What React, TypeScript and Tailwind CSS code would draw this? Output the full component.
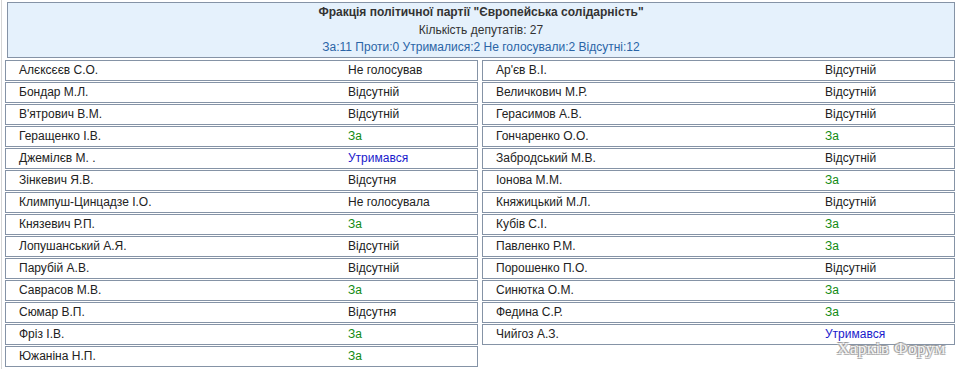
import React from "react";

type Vote = "За" | "Утримався" | "Відсутній" | "Відсутня" | "Не голосував" | "Не голосувала";

interface Deputy {
  name: string;
  vote: Vote;
}

const left: Deputy[] = [
  { name: "Алєксєєв С.О.", vote: "Не голосував" },
  { name: "Бондар М.Л.", vote: "Відсутній" },
  { name: "В'ятрович В.М.", vote: "Відсутній" },
  { name: "Геращенко І.В.", vote: "За" },
  { name: "Джемілєв М. .", vote: "Утримався" },
  { name: "Зінкевич Я.В.", vote: "Відсутня" },
  { name: "Климпуш-Цинцадзе І.О.", vote: "Не голосувала" },
  { name: "Князевич Р.П.", vote: "За" },
  { name: "Лопушанський А.Я.", vote: "Відсутній" },
  { name: "Парубій А.В.", vote: "Відсутній" },
  { name: "Саврасов М.В.", vote: "За" },
  { name: "Сюмар В.П.", vote: "Відсутня" },
  { name: "Фріз І.В.", vote: "За" },
  { name: "Южаніна Н.П.", vote: "За" },
];

const right: Deputy[] = [
  { name: "Ар'єв В.І.", vote: "Відсутній" },
  { name: "Величкович М.Р.", vote: "Відсутній" },
  { name: "Герасимов А.В.", vote: "Відсутній" },
  { name: "Гончаренко О.О.", vote: "За" },
  { name: "Забродський М.В.", vote: "Відсутній" },
  { name: "Іонова М.М.", vote: "За" },
  { name: "Княжицький М.Л.", vote: "Відсутній" },
  { name: "Кубів С.І.", vote: "За" },
  { name: "Павленко Р.М.", vote: "За" },
  { name: "Порошенко П.О.", vote: "Відсутній" },
  { name: "Синютка О.М.", vote: "За" },
  { name: "Федина С.Р.", vote: "За" },
  { name: "Чийгоз А.З.", vote: "Утримався" },
];

// interleave so the grid fills row by row
const cells: (Deputy | null)[] = [];
for (let i = 0; i < left.length; i++) {
  cells.push(left[i]);
  cells.push(right[i] ?? null);
}

function voteColor(v: Vote) {
  if (v === "За") return "text-[#108a10]";
  if (v === "Утримався") return "text-[#1a1acc]";
  return "text-[#222222]";
}

function Row({ d }: { d: Deputy }) {
  return (
    <div className="h-[21px] pb-[2px] flex items-center border border-[#8593a6] bg-white">
      <span className="w-[342px] pl-[13px] text-[#222222]">{d.name}</span>
      <span className={voteColor(d.vote)}>{d.vote}</span>
    </div>
  );
}

export default function App() {
  return (
    <div className="relative w-[958px] h-[369px] overflow-hidden bg-white font-['Liberation_Sans',Arial,sans-serif] text-[12px]">
      <div className="ml-px h-full border-l border-[#d6d6d6] pl-[3px] pt-[2px]">
        <div className="ml-[2px] w-[948px] h-[56px] border border-[#8593a6] bg-[#e5f1fc] flex flex-col items-center pt-px leading-[17.5px]">
          <div className="font-bold text-[#333333]">
            Фракція політичної партії "Європейська солідарність"
          </div>
          <div className="text-[#333333]">Кількість депутатів: 27</div>
          <div className="text-[#2a64a6]">
            За:11 Проти:0 Утрималися:2 Не голосували:2 Відсутні:12
          </div>
        </div>

        <div className="mt-[2px] w-[950px] grid grid-cols-2 gap-x-[4px] gap-y-px">
          {cells.map((d, i) => (d ? <Row key={i} d={d} /> : <div key={i} />))}
        </div>

        <div className="mt-[2px] ml-[3px] w-[946px] h-[10px] border border-[#8593a6]" />
      </div>

      {/* forum watermark over the corner */}
      <div
        className="absolute left-[837px] top-[340px] leading-none whitespace-nowrap font-['Liberation_Serif',serif] text-[17px] tracking-[0.5px] text-[#f4f4f4]"
        style={{ textShadow: "-1px -1px 0 #9a9a9a, 1px 1px 0 #b5b5b5, 1px -1px 0 #b0b0b0, -1px 1px 0 #b0b0b0" }}
      >
        Харків Форум
      </div>
    </div>
  );
}
